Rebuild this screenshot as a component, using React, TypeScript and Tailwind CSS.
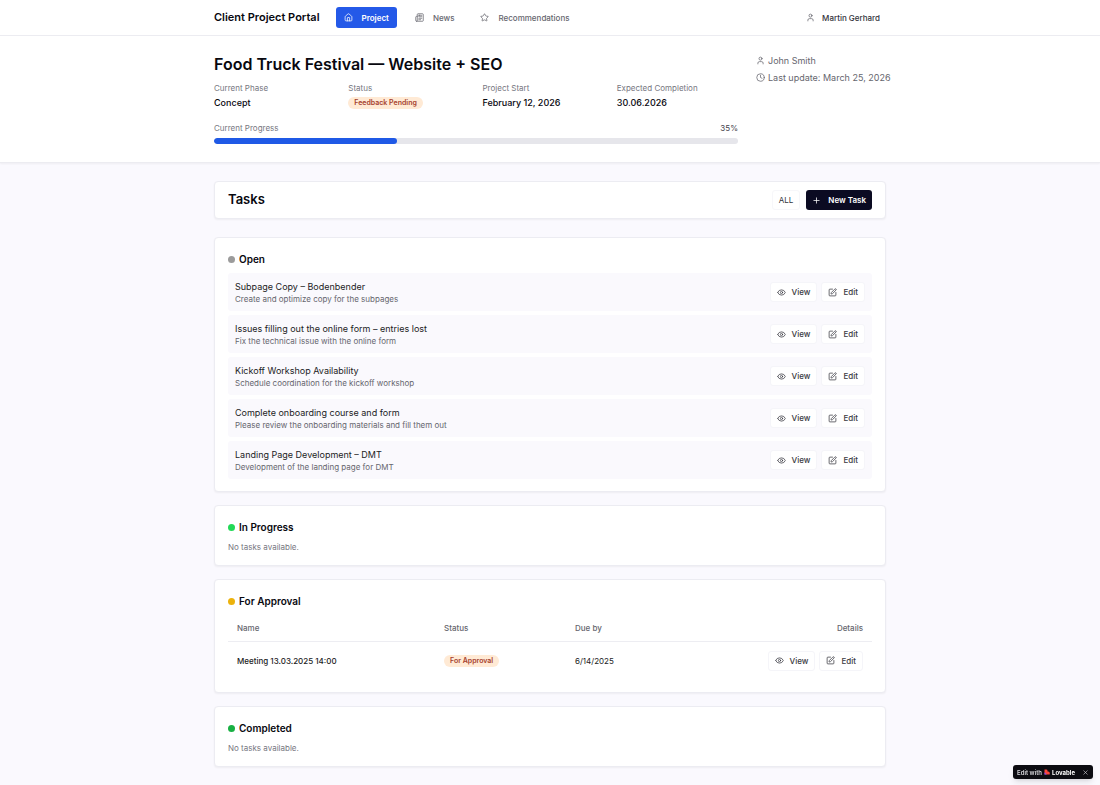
import type { ReactNode } from "react";
import { Clock, Eye, House, Newspaper, Plus, SquarePen, Star, User, X } from "lucide-react";

type Task = { title: string; description: string };

const openTasks: Task[] = [
  { title: "Subpage Copy – Bodenbender", description: "Create and optimize copy for the subpages" },
  { title: "Issues filling out the online form – entries lost", description: "Fix the technical issue with the online form" },
  { title: "Kickoff Workshop Availability", description: "Schedule coordination for the kickoff workshop" },
  { title: "Complete onboarding course and form", description: "Please review the onboarding materials and fill them out" },
  { title: "Landing Page Development – DMT", description: "Development of the landing page for DMT" },
];

function Badge({ children }: { children: ReactNode }) {
  return (
    <span className="flex h-3 w-fit items-center rounded-full bg-[#ffead5] px-1.5 text-[7px] leading-3 font-semibold text-[#a5402d]">
      {children}
    </span>
  );
}

function TaskActions() {
  const button =
    "flex h-5 items-center gap-1.5 rounded-[3px] border border-[#f5f5f9] bg-white px-1.5 text-[8px] font-medium text-[#3a3a42]";
  return (
    <div className="flex shrink-0 justify-end gap-1">
      <button type="button" className={button}>
        <Eye className="size-[9px]" />
        View
      </button>
      <button type="button" className={button}>
        <SquarePen className="size-[9px]" />
        Edit
      </button>
    </div>
  );
}

function Section({ title, dot, children }: { title: string; dot: string; children: ReactNode }) {
  return (
    <section className="rounded-[4px] border border-[#ececf2] bg-white px-[13px] pt-[13px] pb-3 shadow-xs">
      <h3 className="flex h-4 items-center gap-1 text-[10px] font-semibold text-[#08080f]">
        <span className={`size-[7px] rounded-full ${dot}`} />
        {title}
      </h3>
      {children}
    </section>
  );
}

function Fact({ label, children }: { label: string; children: ReactNode }) {
  return (
    <div>
      <dt className="text-[8px] leading-3 text-[#77777f]">{label}</dt>
      <dd className="flex h-[17px] items-center text-[9px] font-medium text-[#08080f]">{children}</dd>
    </div>
  );
}

export default function App() {
  const progress = 35;
  const navLink = "flex h-[21px] items-center gap-[9px] rounded-[3px] px-2 text-[8px] font-medium";

  return (
    <div className="min-h-screen bg-[#faf9fe] font-['Inter',sans-serif] text-[#08080f]">
      <header className="border-b border-[#ececf1] bg-white">
        <div className="mx-auto flex h-[35px] max-w-2xl items-center">
          <a href="#" className="text-[11px] font-semibold">Client Project Portal</a>
          <nav className="ml-4 flex gap-2.5">
            <a href="#project" className={`${navLink} bg-[#2459e8] font-semibold text-white`}>
              <House className="size-[9px]" />
              Project
            </a>
            <a href="#news" className={`${navLink} text-[#66666e]`}>
              <Newspaper className="size-[9px]" />
              News
            </a>
            <a href="#recommendations" className={`${navLink} text-[#66666e]`}>
              <Star className="size-[9px]" />
              Recommendations
            </a>
          </nav>
          <button type="button" className="ml-auto flex items-center gap-[7px] px-1.5 text-[8px] font-medium text-[#33333b]">
            <User className="size-[9px] text-[#66666e]" />
            Martin Gerhard
          </button>
        </div>
      </header>

      <div className="border-b border-[#ececf1] bg-white shadow-xs">
        <div className="mx-auto grid max-w-2xl grid-cols-[minmax(0,1fr)_130px] gap-[18px] py-[18px]">
          <div>
            <h1 className="text-[16px] leading-5 font-semibold">Food Truck Festival — Website + SEO</h1>
            <dl className="mt-2 grid grid-cols-4 gap-[13px]">
              <Fact label="Current Phase">Concept</Fact>
              <Fact label="Status"><Badge>Feedback Pending</Badge></Fact>
              <Fact label="Project Start">February 12, 2026</Fact>
              <Fact label="Expected Completion">30.06.2026</Fact>
            </dl>
            <div className="mt-[11px] flex justify-between text-[8px] leading-3 text-[#77777f]">
              <span id="progress-label">Current Progress</span>
              <span className="text-[#44444c]">{progress}%</span>
            </div>
            <div
              role="progressbar"
              aria-labelledby="progress-label"
              aria-valuenow={progress}
              className="mt-1 h-1.5 overflow-hidden rounded-full bg-[#e6e6eb]"
            >
              <div className="h-full rounded-full bg-[#1f59e6]" style={{ width: `${progress}%` }} />
            </div>
          </div>
          <div className="flex flex-col gap-1 text-[9px] leading-[13px] whitespace-nowrap text-[#66666e]">
            <p className="flex items-center gap-[3px]">
              <User className="size-[9px] shrink-0" />
              John Smith
            </p>
            <p className="flex items-center gap-[3px]">
              <Clock className="size-[9px] shrink-0" />
              Last update: March 25, 2026
            </p>
          </div>
        </div>
      </div>

      <main className="mx-auto max-w-2xl py-[18px]">
        <div className="flex h-[38px] items-center rounded-[4px] border border-[#ececf2] bg-white px-[13px] shadow-xs">
          <h2 className="text-[13px] font-semibold">Tasks</h2>
          <div className="ml-auto flex gap-1.5">
            <button type="button" className="h-5 rounded-[3px] border border-[#f7f7fa] px-1.5 text-[8px] text-[#33333b]">
              ALL
            </button>
            <button
              type="button"
              className="flex h-5 items-center gap-[7px] rounded-[3px] bg-[#0b0b22] px-1.5 text-[8px] font-semibold text-white"
            >
              <Plus className="size-[9px]" />
              New Task
            </button>
          </div>
        </div>

        <div className="mt-[18px] flex flex-col gap-[13px]">
          <Section title="Open" dot="bg-[#9b9b9b]">
            <ul className="mt-1.5 flex flex-col gap-1">
              {openTasks.map((task) => (
                <li
                  key={task.title}
                  className="flex items-center justify-between rounded-[3px] bg-[#faf9fd] px-[7px] py-1.5"
                >
                  <div className="pt-px">
                    <p className="text-[9px] leading-[14px] text-[#1c1c24]">{task.title}</p>
                    <p className="text-[8px] leading-[11px] text-[#66666e]">{task.description}</p>
                  </div>
                  <TaskActions />
                </li>
              ))}
            </ul>
          </Section>

          <Section title="In Progress" dot="bg-[#22d957]">
            <p className="mt-1.5 text-[8px] leading-3 text-[#77777f]">No tasks available.</p>
          </Section>

          <Section title="For Approval" dot="bg-[#ecb20c]">
            <table className="mt-[7px] w-full table-fixed border-collapse text-left text-[8px]">
              <thead>
                <tr className="h-[25px] border-b border-[#ededf2] text-[#66666e]">
                  <th className="w-[207px] px-[9px] font-medium">Name</th>
                  <th className="w-[131px] px-[9px] font-medium">Status</th>
                  <th className="w-[131px] px-[9px] font-medium">Due by</th>
                  <th className="px-[9px] text-right font-medium">Details</th>
                </tr>
              </thead>
              <tbody>
                <tr className="h-[39px] text-[#1c1c24]">
                  <td className="px-[9px] font-medium">Meeting 13.03.2025 14:00</td>
                  <td className="px-[9px]"><Badge>For Approval</Badge></td>
                  <td className="px-[9px]">6/14/2025</td>
                  <td className="px-[9px]"><TaskActions /></td>
                </tr>
              </tbody>
            </table>
          </Section>

          <Section title="Completed" dot="bg-[#18b043]">
            <p className="mt-1.5 text-[8px] leading-3 text-[#77777f]">No tasks available.</p>
          </Section>
        </div>
      </main>

      <div className="fixed right-[7px] bottom-1.5 flex h-3.5 items-center rounded-[3px] bg-[#0c0c12] px-1 text-[6px] font-semibold text-[#d8d8dc] shadow-md">
        <a href="#lovable" className="flex items-center gap-0.5">
          Edit with
          <svg viewBox="0 0 12 12" className="size-1.5" aria-hidden="true">
            <path d="M1 1h3.5A2.5 2.5 0 0 1 7 3.500V5h1.500A3 3 0 0 1 11.500 8v3H1z" fill="#f9443c" />
            <path d="M1 6.500 5.500 11H1z" fill="#7b4dff" />
          </svg>
          <span className="font-bold text-white">Lovable</span>
        </a>
        <button type="button" aria-label="Close" className="ml-[7px]">
          <X className="size-[7px]" />
        </button>
      </div>
    </div>
  );
}
